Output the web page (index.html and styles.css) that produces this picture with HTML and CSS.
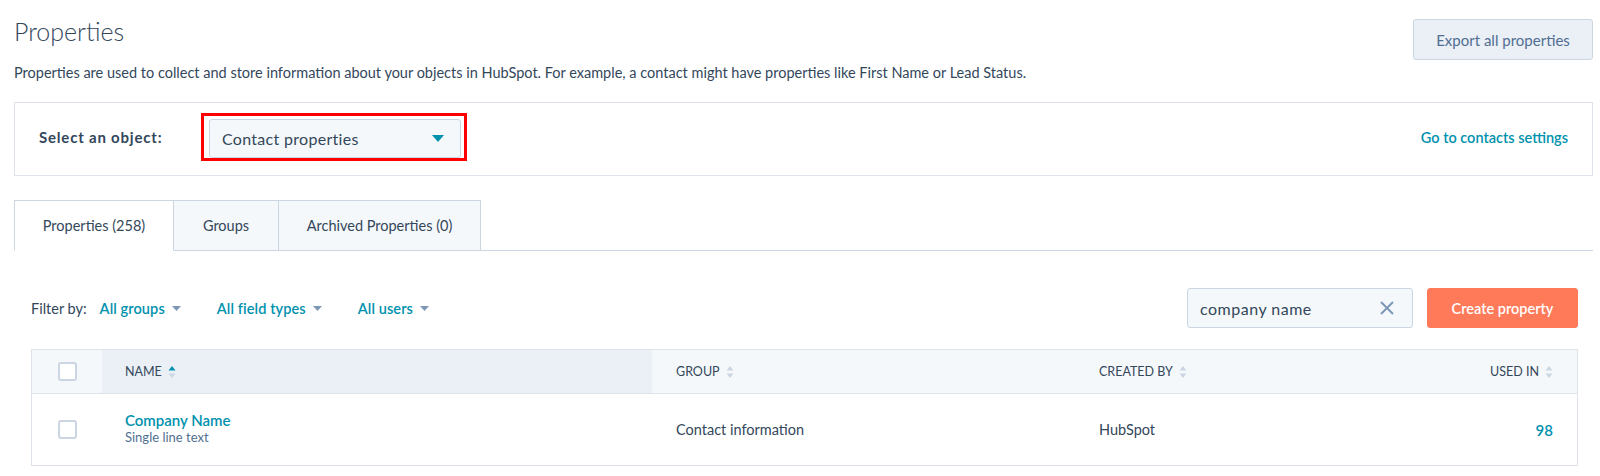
FILE: index.html
```html
<!DOCTYPE html>
<html lang="en">
<head>
    <meta charset="UTF-8">
    <title>Properties</title>
    <link rel="stylesheet" href="styles.css">
</head>
<body>
<div class="page">
    <header class="page-head">
        <div>
            <h1 class="title">Properties</h1>
            <p class="intro">Properties are used to collect and store information about your objects in HubSpot. For example, a contact might have properties like First Name or Lead Status.</p>
        </div>
        <button class="btn-secondary">Export all properties</button>
    </header>

    <section class="object-bar">
        <span class="object-label">Select an object:</span>
        <div class="highlight">
            <div class="object-select">
                <span>Contact properties</span>
                <svg class="select-caret" width="12" height="7" viewBox="0 0 12 7"><path d="M0 0H12L6 7Z" fill="#0091ae"/></svg>
            </div>
        </div>
        <a class="link settings-link" href="#">Go to contacts settings</a>
    </section>

    <nav class="tabs">
        <a class="tab active" href="#">Properties (258)</a>
        <a class="tab" href="#">Groups</a>
        <a class="tab" href="#">Archived Properties (0)</a>
    </nav>

    <div class="content">
        <div class="toolbar">
            <div class="filters">
                <span class="filter-label">Filter by:</span>
                <a class="filter" href="#">All groups <svg width="9" height="5" viewBox="0 0 9 5"><path d="M0 0H9L4.5 5Z" fill="#7c98b6"/></svg></a>
                <a class="filter" href="#">All field types <svg width="9" height="5" viewBox="0 0 9 5"><path d="M0 0H9L4.5 5Z" fill="#7c98b6"/></svg></a>
                <a class="filter" href="#">All users <svg width="9" height="5" viewBox="0 0 9 5"><path d="M0 0H9L4.5 5Z" fill="#7c98b6"/></svg></a>
            </div>
            <div class="actions">
                <div class="search">
                    <span>company name</span>
                    <svg width="14" height="14" viewBox="0 0 14 14"><path d="M1 1L13 13M13 1L1 13" stroke="#7c98b6" stroke-width="2"/></svg>
                </div>
                <button class="btn-primary">Create property</button>
            </div>
        </div>

        <div class="table">
            <div class="row head-row">
                <div class="cell check-cell"><span class="checkbox"></span></div>
                <div class="cell sorted">NAME
                    <svg class="sort" width="8" height="14" viewBox="0 0 8 14"><path d="M4 1L7.5 5.5H0.5Z" fill="#0091ae"/><path d="M4 13L7.5 8.5H0.5Z" fill="#cbd6e2"/></svg>
                </div>
                <div class="cell">GROUP
                    <svg class="sort" width="8" height="14" viewBox="0 0 8 14"><path d="M4 1L7.5 5.5H0.5Z" fill="#cbd6e2"/><path d="M4 13L7.5 8.5H0.5Z" fill="#cbd6e2"/></svg>
                </div>
                <div class="cell">CREATED BY
                    <svg class="sort" width="8" height="14" viewBox="0 0 8 14"><path d="M4 1L7.5 5.5H0.5Z" fill="#cbd6e2"/><path d="M4 13L7.5 8.5H0.5Z" fill="#cbd6e2"/></svg>
                </div>
                <div class="cell right">USED IN
                    <svg class="sort" width="8" height="14" viewBox="0 0 8 14"><path d="M4 1L7.5 5.5H0.5Z" fill="#cbd6e2"/><path d="M4 13L7.5 8.5H0.5Z" fill="#cbd6e2"/></svg>
                </div>
            </div>
            <div class="row body-row">
                <div class="cell check-cell"><span class="checkbox"></span></div>
                <div class="cell name-cell">
                    <a class="prop-name" href="#">Company Name</a>
                    <span class="prop-type">Single line text</span>
                </div>
                <div class="cell">Contact information</div>
                <div class="cell">HubSpot</div>
                <div class="cell right"><a class="used-in" href="#">98</a></div>
            </div>
        </div>
    </div>
</div>
</body>
</html>
```

FILE: styles.css
```css
body { margin: 0; font-family: Lato, "Open Sans", sans-serif; color: #33475b; background: #fff; }
a { text-decoration: none; }
.page { padding: 19px 7px 0 14px; }

.page-head { display: flex; justify-content: space-between; align-items: flex-start; }
.title { margin: 0; font-size: 25px; line-height: 25px; font-weight: 300; }
.intro { margin: 19px 0 0; font-size: 14.5px; line-height: 20px; }
.btn-secondary { width: 180px; height: 41px; background: #eaf0f6; border: 1px solid #cbd6e2; border-radius: 3px; color: #506e91; font: 15px Lato, sans-serif; }

.object-bar { display: flex; align-items: center; margin-top: 19px; border: 1px solid #dfe3eb; padding: 10px 24px 14px; }
.object-label { width: 162px; font-size: 15px; font-weight: 700; letter-spacing: 0.8px; }
.highlight { border: 3px solid #f00; padding: 3px 3px 0 5px; }
.object-select { display: flex; align-items: center; justify-content: space-between; box-sizing: border-box; width: 252px; height: 39px; padding: 0 16px 0 12px; background: #f5f8fa; border: 1px solid #cbd6e2; border-radius: 3px; font-size: 16px; letter-spacing: 0.3px; }
.link { color: #0091ae; }
.settings-link { margin-left: auto; font-size: 14.5px; font-weight: 600; }

.tabs { display: flex; margin-top: 24px; height: 50px; border-bottom: 1px solid #cbd6e2; }
.tab { display: flex; align-items: center; justify-content: center; box-sizing: border-box; height: 51px; border: 1px solid #cbd6e2; border-left: none; background: #f5f8fa; color: #33475b; font-size: 14.5px; }
.tab:nth-child(1) { width: 160px; border-left: 1px solid #cbd6e2; }
.tab:nth-child(2) { width: 105px; }
.tab:nth-child(3) { width: 202px; }
.tab.active { background: #fff; border-bottom-color: #fff; }

.content { padding: 37px 15px 0 17px; }
.toolbar { display: flex; justify-content: space-between; align-items: center; }
.filters { display: flex; align-items: center; font-size: 14.5px; }
.filter-label { margin-right: 13px; }
.filter { display: flex; align-items: center; gap: 7px; margin-right: 36px; color: #0091ae; font-weight: 600; letter-spacing: 0.1px; }
.filter svg { margin-top: 1px; }
.actions { display: flex; gap: 14px; }
.search { display: flex; align-items: center; justify-content: space-between; box-sizing: border-box; width: 226px; height: 40px; padding: 0 18px 0 12px; background: #f5f8fa; border: 1px solid #cbd6e2; border-radius: 3px; font-size: 16px; letter-spacing: 0.5px; }
.btn-primary { width: 151px; height: 40px; background: #ff7a59; border: 1px solid #ff7a59; border-radius: 3px; color: #fff; font: 600 14.5px Lato, sans-serif; }

.table { margin-top: 21px; border: 1px solid #dfe3eb; }
.row { display: grid; grid-template-columns: 70px 550px 423px 1fr 200px; }
.head-row { height: 43px; background: #f5f8fa; border-bottom: 1px solid #dfe3eb; font-size: 12.5px; }
.body-row { height: 71px; font-size: 14.5px; }
.cell { display: flex; align-items: center; padding: 0 24px; gap: 6px; }
.head-row .cell:nth-child(2) { padding-left: 23px; }
.cell.right { justify-content: flex-end; }
.sorted { background: #eaf0f6; }
.check-cell { justify-content: center; padding: 0; }
.checkbox { box-sizing: border-box; width: 19px; height: 19px; border: 2px solid #cbd6e2; border-radius: 3px; background: #fff; }
.name-cell { flex-direction: column; align-items: flex-start; justify-content: center; gap: 0; padding-left: 23px; margin-top: -3px; }
.prop-name { color: #0091ae; font-size: 15px; font-weight: 600; }
.prop-type { font-size: 13px; color: #516f90; }
.used-in { color: #0091ae; font-size: 15px; font-weight: 600; }
```
